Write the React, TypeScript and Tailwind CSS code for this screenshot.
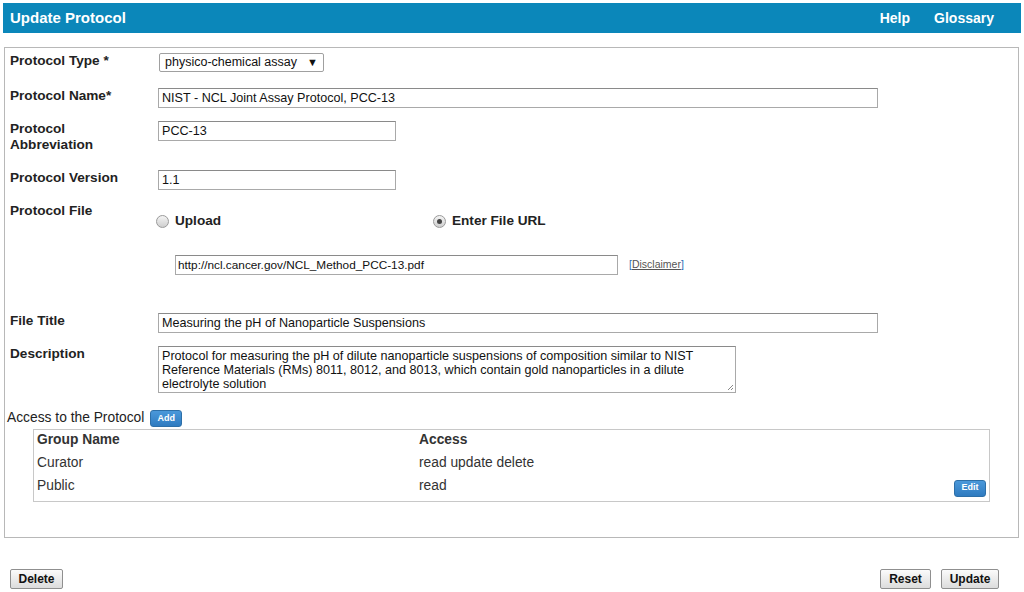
import React from 'react';

const inputCls =
  'h-[20px] border border-[#a9a9a9] border-t-[#8a8a8a] bg-white px-[3px] text-[12.6px] leading-[18px] text-[#111] whitespace-nowrap';

const Label: React.FC<{ children: React.ReactNode }> = ({ children }) => (
  <div className="w-[148px] shrink-0 text-[13.6px] font-bold leading-4 text-[#222]">{children}</div>
);

const Radio: React.FC<{ checked?: boolean; label: string }> = ({ checked, label }) => (
  <div className="flex items-center gap-[6px]">
    <span className="flex h-[13px] w-[13px] items-center justify-center rounded-full border border-[#9a9a9a] bg-gradient-to-b from-[#f4f4f4] to-[#cfcfcf]">
      {checked && <span className="h-[5px] w-[5px] rounded-full bg-[#444]" />}
    </span>
    <span className="text-[13.6px] font-bold text-[#222]">{label}</span>
  </div>
);

const GrayButton: React.FC<{ children: React.ReactNode; w: string }> = ({ children, w }) => (
  <button
    className={`${w} h-[20px] rounded-[2px] border border-[#8f8f8f] bg-gradient-to-b from-[#fbfbfb] to-[#dcdcdc] text-[12px] font-bold text-[#111]`}
  >
    {children}
  </button>
);

const BlueButton: React.FC<{ children: React.ReactNode }> = ({ children }) => (
  <button className="flex h-[17px] w-[32px] items-center justify-center rounded-[3px] border border-[#2d6fa8] bg-gradient-to-b from-[#4a98da] to-[#2f7bc0] text-[9px] font-bold text-white">
    {children}
  </button>
);

export default function App() {
  return (
    <div className="h-[592px] w-[1024px] overflow-hidden bg-white font-['Liberation_Sans',Arial,sans-serif] text-[#222]">
      {/* Title bar */}
      <div className="pl-[3px] pt-[3px]">
        <div className="flex h-[30px] w-[1018px] items-center justify-between bg-[#0b87ba] pl-[7px] pr-[27px] text-[14px] font-bold text-white">
          <span className="text-[15px]">Update Protocol</span>
          <div className="flex gap-[24px]">
            <span>Help</span>
            <span>Glossary</span>
          </div>
        </div>
      </div>

      {/* Form box */}
      <div className="ml-[4px] mt-[14px] h-[491px] w-[1015px] border border-[#b8b8b8] pl-[5px] pt-[5px]">
        <div className="flex h-[35px]">
          <Label>Protocol Type *</Label>
          <div className="ml-px flex h-[19px] w-[165px] items-center justify-between rounded-[2px] border border-[#a0a0a0] bg-white pl-[5px] pr-[5px] text-[12.5px] text-[#111]">
            <span>physico-chemical assay</span>
            <span className="text-[11px]">▼</span>
          </div>
        </div>

        <div className="flex h-[33px]">
          <Label>Protocol Name*</Label>
          <div className={`${inputCls} w-[720px]`}>NIST - NCL Joint Assay Protocol, PCC-13</div>
        </div>

        <div className="flex h-[49px]">
          <Label>
            Protocol
            <br />
            Abbreviation
          </Label>
          <div className={`${inputCls} w-[238px]`}>PCC-13</div>
        </div>

        <div className="flex h-[33px]">
          <Label>Protocol Version</Label>
          <div className={`${inputCls} w-[238px]`}>1.1</div>
        </div>

        <div className="flex h-[110px]">
          <Label>Protocol File</Label>
          <div className="flex flex-col">
            <div className="-ml-[2px] mt-[10px] flex h-[16px] items-center">
              <div className="w-[277px]">
                <Radio label="Upload" />
              </div>
              <Radio checked label="Enter File URL" />
            </div>
            <div className="ml-[17px] mt-[26px] flex items-center">
              <div className="h-[20px] w-[443px] border border-[#a9a9a9] border-t-[#8a8a8a] bg-white px-[2px] text-[11.8px] leading-[18px] text-[#111]">
                http://ncl.cancer.gov/NCL_Method_PCC-13.pdf
              </div>
              <span className="ml-[11px] text-[10.5px] text-[#555]">
                <span className="text-[#2a6fb5]">[</span>
                <span className="underline">Disclaimer</span>
                <span className="text-[#2a6fb5]">]</span>
              </span>
            </div>
          </div>
        </div>

        <div className="flex h-[33px]">
          <Label>File Title</Label>
          <div className={`${inputCls} w-[720px]`}>Measuring the pH of Nanoparticle Suspensions</div>
        </div>

        <div className="flex h-[62px]">
          <Label>Description</Label>
          <div className="relative h-[47px] w-[578px] border border-[#a9a9a9] border-t-[#8a8a8a] bg-white px-[3px] pt-[2px] text-[12.6px] leading-[14px] text-[#111]">
            Protocol for measuring the pH of dilute nanoparticle suspensions of composition similar to NIST
            <br />
            Reference Materials (RMs) 8011, 8012, and 8013, which contain gold nanoparticles in a dilute
            <br />
            electrolyte solution
            <svg className="absolute bottom-[1px] right-[1px]" width="8" height="8" viewBox="0 0 8 8">
              <path d="M7 2 L2 7 M7 5 L5 7" stroke="#888" strokeWidth="1" />
            </svg>
          </div>
        </div>

        {/* Access */}
        <div className="-ml-[3px] flex items-center gap-[6px]">
          <span className="text-[13.8px] text-[#222]">Access to the Protocol</span>
          <BlueButton>Add</BlueButton>
        </div>
        <div className="ml-[23px] w-[957px] border border-[#c8c8c8] px-[3px] pb-[3px] text-[13.8px] text-[#333]">
          <div className="flex h-[22px] items-center font-bold">
            <span className="w-[382px]">Group Name</span>
            <span>Access</span>
          </div>
          <div className="flex h-[23px] items-center">
            <span className="w-[382px]">Curator</span>
            <span>read update delete</span>
          </div>
          <div className="flex h-[23px] items-center">
            <span className="w-[382px]">Public</span>
            <span className="flex-1">read</span>
            <div className="mt-[4px]">
              <BlueButton>Edit</BlueButton>
            </div>
          </div>
        </div>
      </div>

      {/* Action buttons */}
      <div className="mt-[31px] flex items-center justify-between pl-[10px] pr-[25px]">
        <GrayButton w="w-[53px]">Delete</GrayButton>
        <div className="flex gap-[10px]">
          <GrayButton w="w-[51px]">Reset</GrayButton>
          <GrayButton w="w-[58px]">Update</GrayButton>
        </div>
      </div>
    </div>
  );
}
